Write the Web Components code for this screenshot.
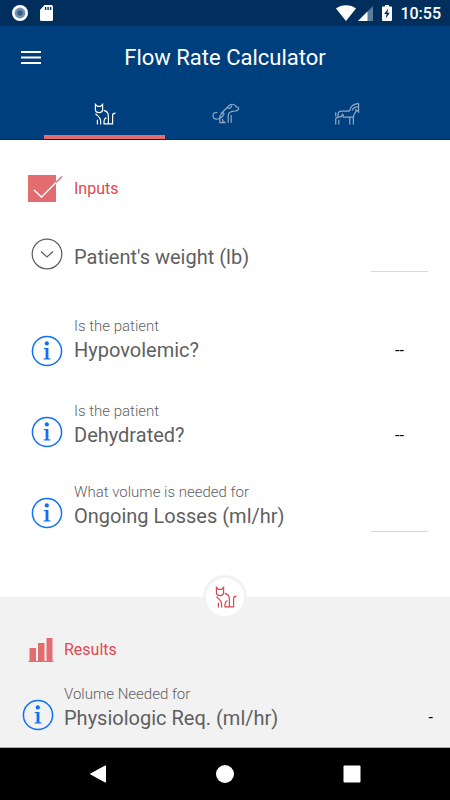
<!DOCTYPE html>
<html lang="en">
<head>
<meta charset="utf-8">
<meta name="viewport" content="width=device-width, initial-scale=1">
<title>Flow Rate Calculator</title>
<style>
html, body { margin: 0; }
body { font-family: Roboto, "Liberation Sans", sans-serif; color: #5f5f5f; background: #fff; }
</style>
</head>
<body>
<flow-app></flow-app>
<script>
const define = (name, html, setup) => {
  const template = document.createElement('template');
  template.innerHTML = html;
  customElements.define(name, class extends HTMLElement {
    constructor() {
      super();
      this.attachShadow({ mode: 'open' }).append(template.content.cloneNode(true));
    }
    connectedCallback() { if (setup) setup(this, this.shadowRoot); }
  });
};

const animals = {
  cat: '<svg viewBox="0 0 22 22" width="22" height="22"><path d="M1.4 1.3V6.5C1.4 8.3 3.2 9.6 5 9.7C6.8 9.6 8.6 8.3 8.6 6.5V1.3L6.6 3.4H3.4ZM1.5 10.6C3.5 13 6.6 14.2 6.6 17.5V21.5M3.4 16.8V21.5M9.7 7.4C12.6 8 14.4 10.3 14.4 13V20.6M12.4 14.6C10.8 15.4 10 16.6 10 18.2V20.8H18.6V12.4C18.6 10.8 19.6 10.2 21.5 10.2"/></svg>',
  dog: '<svg viewBox="0 0 28 22" width="28" height="22"><path d="M5.4 9.7C2.8 9 1 10.4 1 12.7C1 15.4 3.7 17 6.8 15.8C9.6 14.6 12.6 12 11.9 10.3C11.1 8.8 8 12 7.6 15C7.3 18 8.7 19.3 8.3 19.6H13.4C11 18.8 10.2 17.2 10.6 15.8M8.8 10.8L17.8 2.1C19.8 1 22.8 1.2 24.2 3.6L26.6 4.8C26.8 6.8 25.2 7.8 23.4 8L20.4 8.4C17.2 9 16.2 10.8 16.2 13V19.8M15.8 4.6C16.8 5.8 19 5.8 20 2.4M19.2 12V19.8"/></svg>',
  horse: '<svg viewBox="0 0 28 25" width="28" height="25"><path d="M25.6 2.3V11L22.3 8.2M25.6 2.4C20.8 3 18 5 17.5 7.8C17.2 9.6 16 10.2 13.8 10.2H8.5C5.8 10.2 5 11.8 5 14V16M2.7 11.3V15.4M2.7 23.5V18.2C2.7 16.8 3.8 16.2 5.8 16.2C8.4 16.2 9.4 15 9.4 12.6M5.8 23.5V18.8M10.3 13.4V16.2H16.8V23.5M16.8 16.2H20.4V23.5M20.4 16.2C20.4 12.6 23.2 12 23.2 9.2M19.4 9.4C19.6 7.2 21.6 5.8 25.5 5.6"/></svg>'
};

define('animal-icon', `<style>
:host { display: block; line-height: 0; }
svg { fill: none; stroke: currentColor; stroke-width: 1.2; }
</style>`, (host, root) => {
  root.querySelector('svg')?.remove();
  root.append(document.createRange().createContextualFragment(animals[host.getAttribute('kind')]));
});

define('status-bar', `<style>
:host { display: flex; align-items: center; height: 26px; padding: 0 9px 0 12px; background: #002f5e; color: #fff; font-size: 16px; font-weight: 500; line-height: 26px; }
.left { display: flex; align-items: center; gap: 12px; flex: 1; }
.right { display: flex; align-items: center; }
time { margin-left: 8px; padding-top: 2px; }
svg { display: block; }
</style>
<div class="left">
<svg width="16" height="16" viewBox="0 0 16 16"><circle cx="8" cy="8" r="8" fill="#fff"/><circle cx="8" cy="8" r="5.4" fill="#7694b0"/><circle cx="8" cy="8" r="2.8" fill="#365f88"/></svg>
<svg width="13" height="16" viewBox="0 0 13 16"><path d="M4.500 0H11.500Q13 0 13 1.500V14.500Q13 16 11.500 16H1.500Q0 16 0 14.500V5Z" fill="#fff"/><path d="M5.600 2V5M8.100 2V5M10.600 2V5" stroke="#002f5e" stroke-width="1.400"/></svg>
</div>
<div class="right">
<svg width="20" height="16" viewBox="0 0 20 16"><path d="M0 3.500C5-1 15-1 20 3.500L10 16Z" fill="#fff"/></svg>
<svg width="16" height="16" viewBox="0 0 16 16" style="margin-left:2px"><path d="M0 16L15 1V16Z" fill="#5a7d9f"/><path d="M0 16L9.500 6.500V16Z" fill="#fff"/></svg>
<svg width="10" height="16" viewBox="0 0 10 16" style="margin-left:8px"><path d="M3 0H7V1.500H9Q10 1.500 10 2.500V15Q10 16 9 16H1Q0 16 0 15V2.500Q0 1.500 1 1.500H3Z" fill="#fff"/><path d="M6.200 3.500L2.200 9H4.600L3.800 13.500L7.800 7.800H5.400Z" fill="#002f5e"/></svg>
<time>10:55</time>
</div>`);

define('app-header', `<style>
:host { display: block; background: #003f7d; color: #fff; border-bottom: 1px solid #002a60; }
.bar { display: grid; grid-template-columns: 22px 1fr 22px; align-items: center; height: 64px; padding: 0 20px; }
h1 { margin: 0; font-size: 22px; line-height: 28px; font-weight: 400; text-align: center; }
button { display: block; margin: 0; padding: 0; border: 0; background: none; color: inherit; }
.bar svg { display: block; }
nav { display: grid; grid-template-columns: repeat(3, 1fr); padding: 0 43px 0 44px; }
nav button { display: grid; justify-items: center; align-items: center; height: 49px; box-sizing: border-box; border-bottom: 4px solid transparent; padding-top: 2px; color: #8fa9c6; }
nav button[aria-selected=true] { color: #fff; border-color: #e76c70; }
</style>
<div class="bar"><button aria-label="Menu"><svg width="22" height="16" viewBox="0 0 22 16"><path d="M1 2H21M1 7.500H21M1 13H21" stroke="#fff" stroke-width="2.200"/></svg></button><h1>Flow Rate Calculator</h1></div>
<nav role="tablist">
<button role="tab" aria-selected="true" aria-label="Cat"><animal-icon kind="cat"></animal-icon></button>
<button role="tab" aria-selected="false" aria-label="Dog"><animal-icon kind="dog"></animal-icon></button>
<button role="tab" aria-selected="false" aria-label="Horse"><animal-icon kind="horse"></animal-icon></button>
</nav>`);

define('section-title', `<style>
:host { display: grid; grid-template-columns: var(--icon-column, 46px) 1fr; align-items: center; color: #e2474f; }
h2 { margin: 0; font-size: 16px; line-height: 28px; font-weight: 400; }
::slotted(svg) { display: block; }
</style><slot name="icon"></slot><h2><slot></slot></h2>`);

define('info-button', `<style>
:host { display: block; }
button { display: block; margin: 0; padding: 0; border: 0; background: none; border-radius: 50%; }
svg { display: block; }
.chevron { display: none; }
:host([kind=expand]) .chevron { display: block; }
:host([kind=expand]) .info { display: none; }
</style>
<button aria-label="Details">
<svg class="info" width="32" height="32" viewBox="0 0 32 32"><circle cx="16" cy="16" r="14.600" fill="none" stroke="#0f70fa" stroke-width="1.500"/><circle cx="15.800" cy="8.400" r="2.100" fill="#0f70fa"/><path d="M12.800 13H17.400V23.200L19.400 23.600V24.600H12.600V23.600L14.600 23.200V14.300L12.800 14Z" fill="#0f70fa"/></svg>
<svg class="chevron" width="32" height="32" viewBox="0 0 32 32" fill="none" stroke="#5d5d5d" stroke-width="1.200"><circle cx="16" cy="16" r="14.800"/><path d="M10 13.500L16 19L22 13.500"/></svg>
</button>`);

define('field-row', `<style>
:host { display: grid; grid-template-columns: var(--icon-column, 43px) 1fr auto; align-items: start; }
info-button { margin-top: 15px; }
:host([low]) info-button { margin-top: 19px; }
:host([plain]) info-button { margin-top: 0; }
:host([plain]) label { padding: 5px 0 1px; }
label { display: block; padding-top: 1px; }
small { display: block; font-size: 15px; line-height: 19px; font-weight: 300; }
strong { display: block; font-size: 20px; line-height: 28px; font-weight: 400; }
:host([plain]) small { display: none; }
input, select { display: block; width: 57px; margin: 0; padding: 0; border: 0; border-radius: 0; background: none; color: #000; font: inherit; font-size: 16px; text-align: center; box-sizing: border-box; }
input { height: 28px; border-bottom: 1px solid #d9d9d9; align-self: end; }
:host(:not([plain])) input { margin-bottom: -2px; }
select { appearance: none; height: 28px; text-align-last: center; margin-top: 20px; }
output { color: #000; font-size: 16px; line-height: 28px; padding-top: 20px; }
</style>
<info-button></info-button>
<label for="value"><small></small><strong></strong></label>`, (host, root) => {
  if (root.querySelector('#value')) return;
  root.querySelector('small').textContent = host.getAttribute('caption') || '';
  root.querySelector('strong').textContent = host.getAttribute('name');
  if (host.hasAttribute('plain')) root.querySelector('info-button').setAttribute('kind', 'expand');
  const type = host.getAttribute('control');
  const control = document.createElement(type);
  control.id = 'value';
  if (type === 'input') control.inputMode = 'decimal';
  if (type === 'select') ['--', 'Yes', 'No'].forEach(t => control.add(new Option(t)));
  if (type === 'output') control.textContent = '-';
  root.append(control);
});

define('system-nav', `<style>
:host { display: grid; grid-template-columns: repeat(3, 127px); justify-content: center; height: 52px; background: #000; border-top: 1px solid #aaa; }
button { display: grid; place-items: center; margin: 0; padding: 0; border: 0; background: none; }
svg { display: block; }
</style>
<button aria-label="Back"><svg width="18" height="18" viewBox="0 0 18 18"><path d="M16.500 0.800V17.200L1.500 9Z" fill="#fff" stroke="#fff" stroke-linejoin="round"/></svg></button>
<button aria-label="Home"><svg width="18" height="18" viewBox="0 0 18 18"><circle cx="9" cy="9" r="9" fill="#fff"/></svg></button>
<button aria-label="Recent apps"><svg width="18" height="18" viewBox="0 0 18 18"><rect x="0.500" y="0.500" width="17" height="17" rx="1" fill="#fff"/></svg></button>`);

define('flow-app', `<style>
:host { display: flex; flex-direction: column; min-height: 100vh; }
.inputs { padding: 35px 22px 67px 28px; }
.inputs field-row { padding-left: 3px; }
.first { margin-top: 35px; }
.second { margin-top: 44px; }
.third { margin-top: 34px; }
.fourth { margin-top: 33px; }
.results { flex: 1; position: relative; background: #f2f2f2; padding: 39px 17px 12px 22px; --icon-column: 42px; }
.results section-title { padding-left: 6px; --icon-column: 36px; }
.results field-row { margin-top: 20px; }
.badge { position: absolute; top: 0; left: 50%; transform: translate(-50%, -50%); width: 36px; height: 38px; padding-left: 2px; display: grid; place-items: center; border: 3px solid #f2f2f2; border-radius: 50%; background: #fff; color: #d9474e; }
</style>
<status-bar></status-bar>
<app-header></app-header>
<section class="inputs">
<section-title><svg slot="icon" width="36" height="28" viewBox="0 0 36 28"><path d="M0 0H28V27H0Z" fill="#e36c70"/><path d="M28 7.500L34 1.500" stroke="#e36c70" stroke-width="1.500"/><path d="M6 15L13.500 22L28 7.500" fill="none" stroke="#fff" stroke-width="1.500"/></svg>Inputs</section-title>
<field-row class="first" plain name="Patient's weight (lb)" control="input"></field-row>
<field-row class="second" low caption="Is the patient" name="Hypovolemic?" control="select"></field-row>
<field-row class="third" caption="Is the patient" name="Dehydrated?" control="select"></field-row>
<field-row class="fourth" caption="What volume is needed for" name="Ongoing Losses (ml/hr)" control="input"></field-row>
</section>
<section class="results">
<div class="badge"><animal-icon kind="cat"></animal-icon></div>
<section-title><svg slot="icon" width="26" height="26" viewBox="0 0 26 26"><path d="M1.500 11H8V24H1.500ZM10 6H16.500V24H10ZM18.500 1H24.500V24H18.500ZM0.500 24H25.500V25H0.500Z" fill="#e36c70"/></svg>Results</section-title>
<field-row caption="Volume Needed for" name="Physiologic Req. (ml/hr)" control="output"></field-row>
</section>
<system-nav></system-nav>`);
</script>
</body>
</html>
